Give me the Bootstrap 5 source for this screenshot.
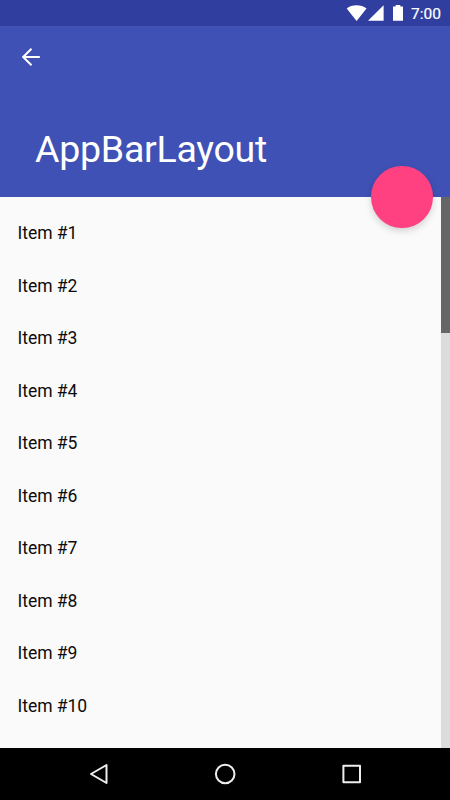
<!DOCTYPE html>
<html lang="en">
<head>
<meta charset="utf-8">
<meta name="viewport" content="width=device-width, initial-scale=1">
<title>AppBarLayout</title>
<link href="https://cdn.jsdelivr.net/npm/bootstrap@5.3.0/dist/css/bootstrap.min.css" rel="stylesheet">
<style>
body { font-family: Roboto, "Liberation Sans", sans-serif; background: #fafafa; }
.screen { width: 450px; height: 800px; }
.status-bar { height: 26px; background: #303f9f; font-size: 15.5px; font-weight: 400; -webkit-text-stroke: .2px #fff; padding-right: 9px; }
.clock { width: 30px; white-space: nowrap; line-height: 26px; padding-top: 1px; margin-left: 7.5px; }
.app-bar { height: 171px; background: #3f51b5; padding: 22px 0 0 22px; }
.app-title { font-size: 37.5px; line-height: 44px; font-weight: 400; letter-spacing: -.26px; margin: 0 0 26px 13px; }
.fab { left: 371px; top: 166px; width: 61.5px; height: 61.5px; background: #ff4081; border: 0; box-shadow: 0 3px 7px rgba(0,0,0,.16); z-index: 2; }
.items { padding-top: 10px; }
.items .list-group-item { height: 52.5px; padding: 0 17.5px; font-size: 17.5px; line-height: 52px; letter-spacing: -.04px; color: #0c0c0c; }
.scroll-track { width: 9px; background: #dcdcdc; }
.scroll-thumb { height: 136.4px; background: #666; }
.nav-keys { height: 52px; background: #000; }
svg { display: block; }
</style>
</head>
<body>
<div class="screen d-flex flex-column position-relative overflow-hidden">
  <div class="status-bar d-flex align-items-center justify-content-end text-white flex-shrink-0">
    <svg width="58" height="18" viewBox="346 4 58 18" fill="#fff">
      <path d="M346.7 8.5C352 4.3 361 4.3 366.5 8.5L356.6 20.9Z"/>
      <path d="M368 20.8H383.6V5.2Z"/>
      <path d="M393 6.6h2.7V5h4.6v1.6h2.7v14.2h-10z"/>
    </svg>
    <span class="clock">7:00</span>
  </div>
  <header class="app-bar d-flex flex-column justify-content-between text-white flex-shrink-0">
    <a href="#" aria-label="Back">
      <svg width="18" height="18" viewBox="0 0 18 18" fill="none" stroke="#fff" stroke-width="2"><path d="M17.8 9H1.5M9.5 .7L1.2 9l8.3 8.3"/></svg>
    </a>
    <h1 class="app-title">AppBarLayout</h1>
  </header>
  <main class="d-flex flex-grow-1 overflow-hidden">
    <ul class="items list-group list-group-flush flex-grow-1">
      <li class="list-group-item bg-transparent border-0">Item #1</li>
      <li class="list-group-item bg-transparent border-0">Item #2</li>
      <li class="list-group-item bg-transparent border-0">Item #3</li>
      <li class="list-group-item bg-transparent border-0">Item #4</li>
      <li class="list-group-item bg-transparent border-0">Item #5</li>
      <li class="list-group-item bg-transparent border-0">Item #6</li>
      <li class="list-group-item bg-transparent border-0">Item #7</li>
      <li class="list-group-item bg-transparent border-0">Item #8</li>
      <li class="list-group-item bg-transparent border-0">Item #9</li>
      <li class="list-group-item bg-transparent border-0">Item #10</li>
    </ul>
    <div class="scroll-track flex-shrink-0"><div class="scroll-thumb"></div></div>
  </main>
  <nav class="nav-keys flex-shrink-0">
    <svg width="450" height="52" viewBox="0 748 450 52" fill="none" stroke="#eee" stroke-width="2" stroke-linejoin="round">
      <path d="M106.5 765V783L91 774Z"/>
      <circle cx="225.2" cy="774" r="9.3"/>
      <rect x="343.4" y="765.8" width="16.6" height="16.4"/>
    </svg>
  </nav>
  <button type="button" class="fab position-absolute rounded-circle p-0" aria-label="Action"></button>
</div>
<script src="https://cdn.jsdelivr.net/npm/bootstrap@5.3.0/dist/js/bootstrap.bundle.min.js"></script>
</body>
</html>
